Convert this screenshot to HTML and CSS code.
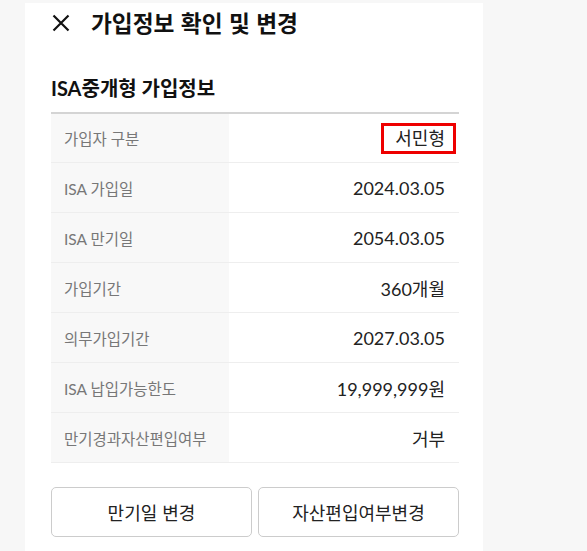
FILE: index.html
```html
<!DOCTYPE html>
<html lang="ko">
<head>
<meta charset="utf-8">
<link rel="stylesheet" href="styles.css">
</head>
<body>
<div class="panel">
  <header class="header">
    <svg class="close" width="18" height="18" viewBox="0 0 18 18" aria-hidden="true">
      <path d="M1.5 1.5 L16.5 16.5 M16.5 1.5 L1.5 16.5" stroke="#111" stroke-width="2.2" fill="none"/>
    </svg>
    <h1 class="title">가입정보 확인 및 변경</h1>
  </header>
  <h2 class="section-title">ISA중개형 가입정보</h2>
  <div class="info-table">
    <div class="row"><div class="label">가입자 구분</div><div class="value"><span class="mark">서민형</span></div></div>
    <div class="row"><div class="label">ISA 가입일</div><div class="value">2024.03.05</div></div>
    <div class="row"><div class="label">ISA 만기일</div><div class="value">2054.03.05</div></div>
    <div class="row"><div class="label">가입기간</div><div class="value">360개월</div></div>
    <div class="row"><div class="label">의무가입기간</div><div class="value">2027.03.05</div></div>
    <div class="row"><div class="label">ISA 납입가능한도</div><div class="value">19,999,999원</div></div>
    <div class="row"><div class="label">만기경과자산편입여부</div><div class="value">거부</div></div>
  </div>
  <div class="actions">
    <button class="btn">만기일 변경</button>
    <button class="btn">자산편입여부변경</button>
  </div>
</div>
</body>
</html>
```

FILE: styles.css
```css
html, body {
  margin: 0;
  padding: 0;
}
body {
  background: #f7f7f7;
  font-family: Lato, "Noto Sans CJK KR", sans-serif;
  color: #222;
}
.panel {
  box-sizing: border-box;
  margin: 3px 0 0 25px;
  width: 458px;
  min-height: 548px;
  background: #fff;
  padding: 0 24px 0 26px;
}
.header {
  display: flex;
  align-items: center;
  height: 40px;
  gap: 21px;
}
.close {
  display: block;
  margin-left: 1px;
}
.title {
  margin: 0;
  font-family: "Noto Sans CJK KR", sans-serif;
  font-size: 22.7px;
  font-weight: 700;
  color: #111;
  line-height: 30px;
}
.section-title {
  margin: 31px 0 10px;
  font-family: Lato, "Noto Sans CJK KR", sans-serif;
  font-size: 20px;
  font-weight: 700;
  line-height: 28px;
  color: #111;
}
.info-table {
  border-top: 2px solid #d4d4d4;
}
.row {
  display: grid;
  grid-template-columns: 178px 1fr;
  height: 50px;
  border-bottom: 1px solid #eeeeee;
  box-sizing: border-box;
}
.row:first-child {
  height: 49px;
}
.label {
  background: #f8f8f8;
  color: #777;
  font-size: 15.5px;
  display: flex;
  align-items: center;
  padding-left: 13px;
}
.value {
  display: flex;
  align-items: center;
  justify-content: flex-end;
  padding-right: 14px;
  font-size: 18px;
  color: #222;
}
.mark {
  border: 3px solid #ee0000;
  line-height: 25px;
  padding: 0 8px 0 11px;
  margin-right: -11px;
}
.actions {
  display: grid;
  grid-template-columns: 1fr 1fr;
  gap: 6px;
  margin-top: 24px;
}
.btn {
  height: 50px;
  background: #fff;
  border: 1px solid #cccccc;
  border-radius: 5px;
  font-family: "Noto Sans CJK KR", sans-serif;
  font-size: 18px;
  color: #222;
  padding: 0;
}
```
